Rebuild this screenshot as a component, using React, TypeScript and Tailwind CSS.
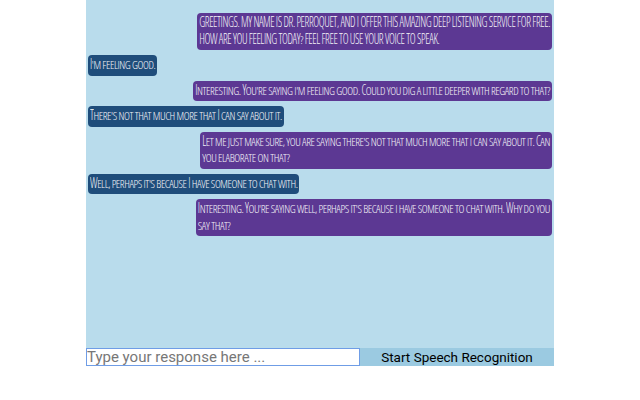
import { useState } from 'react'

type Message = { from: 'bot' | 'user'; lines: string[] }

const messages: Message[] = [
  {
    from: 'bot',
    lines: [
      'GREETINGS. MY NAME IS DR. PERROQUET, AND I OFFER THIS AMAZING DEEP LISTENING SERVICE FOR FREE.',
      'HOW ARE YOU FEELING TODAY? FEEL FREE TO USE YOUR VOICE TO SPEAK.',
    ],
  },
  { from: 'user', lines: ["I'm feeling good."] },
  {
    from: 'bot',
    lines: ["Interesting. You're saying i'm feeling good. Could you dig a little deeper with regard to that?"],
  },
  { from: 'user', lines: ["There's not that much more that I can say about it."] },
  {
    from: 'bot',
    lines: [
      "Let me just make sure, you are saying there's not that much more that i can say about it. Can",
      'you elaborate on that?',
    ],
  },
  { from: 'user', lines: ["Well, perhaps it's because I have someone to chat with."] },
  {
    from: 'bot',
    lines: [
      "Interesting. You're saying well, perhaps it's because i have someone to chat with. Why do you",
      'say that?',
    ],
  },
]

// hand-rolled small caps: everything uppercased at one width,
// real capitals just stretched a little taller
function SmallCaps({ text }: { text: string }) {
  const runs = text.match(/[A-Z]+|[a-z]+|[^A-Za-z]+/g) ?? []
  return (
    <>
      {runs.map((r, i) =>
        /[A-Z]/.test(r) ? (
          <span key={i} className="inline-block origin-[50%_75%] scale-y-[1.22] leading-[11px]">
            {r}
          </span>
        ) : (
          <span key={i}>{r.toUpperCase()}</span>
        )
      )}
    </>
  )
}

export default function App() {
  const [text, setText] = useState('')

  return (
    <div className="min-h-[400px] bg-white">
      <div className="ml-[86px] w-[468px]">
        <div className="flex h-[348px] flex-col gap-[5px] bg-[#b9dcec] px-[2px] pt-[13px]">
          {messages.map((m, i) => (
            <div key={i} className={m.from === 'bot' ? 'flex justify-end' : 'flex justify-start'}>
              <div
                className={
                  (m.from === 'bot' ? 'bg-[#5c3893] ' : 'bg-[#1f4d7b] ') +
                  "flex flex-col gap-[2px] rounded-[4px] px-[2px] py-[3px] font-['Open_Sans'] font-stretch-condensed font-light text-[11.2px] leading-[14.5px] tracking-[-0.4px] text-[#f4f4f8] whitespace-nowrap"
                }
              >
                {m.lines.map((l, j) => (
                  <div key={j}>
                    <SmallCaps text={l} />
                  </div>
                ))}
              </div>
            </div>
          ))}
        </div>
        <div className="flex h-[18px]">
          <input
            value={text}
            onChange={(e) => setText(e.target.value)}
            placeholder="Type your response here ..."
            className="h-[18px] w-[274px] border border-[#6f9de6] bg-white px-0 font-['Roboto'] text-[15px] text-black outline-none placeholder:text-[#777]"
          />
          <button
            type="button"
            className="flex-1 bg-[#9bcae1] font-['Roboto'] text-[13.5px] leading-[18px] text-black"
          >
            Start Speech Recognition
          </button>
        </div>
      </div>
    </div>
  )
}
